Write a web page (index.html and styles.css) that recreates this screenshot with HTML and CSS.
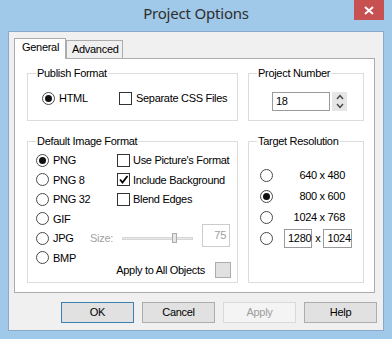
FILE: index.html
```html
<!DOCTYPE html>
<html lang="en">
<head>
    <meta charset="UTF-8">
    <title>Project Options</title>
    <link rel="stylesheet" href="styles.css">
</head>
<body>
    <div class="window">
        <div class="titlebar">
            <div class="title">Project Options</div>
            <div class="close">
                <svg width="10" height="9" viewBox="0 0 10 9"><path d="M1 1 L9 8 M9 1 L1 8" stroke="#fff" stroke-width="2" fill="none"/></svg>
            </div>
        </div>

        <div class="client">
            <div class="tabs">
                <div class="tab active">General</div>
                <div class="tab">Advanced</div>
            </div>

            <div class="panel">
                <!-- Publish Format -->
                <div class="group">
                    <div class="group-title">Publish Format</div>
                    <div class="publish-row">
                        <div class="opt html-opt"><span class="radio on"></span>HTML</div>
                        <div class="opt"><span class="check"></span>Separate CSS Files</div>
                    </div>
                </div>

                <!-- Project Number -->
                <div class="group">
                    <div class="group-title">Project Number</div>
                    <div class="spin-row">
                        <div class="field num">18</div>
                        <div class="spin">
                            <svg width="8" height="6" viewBox="0 0 8 6"><polyline points="1,5 4,1.5 7,5" stroke="#444" stroke-width="1.4" fill="none"/></svg>
                            <svg width="8" height="6" viewBox="0 0 8 6"><polyline points="1,1 4,4.5 7,1" stroke="#444" stroke-width="1.4" fill="none"/></svg>
                        </div>
                    </div>
                </div>

                <!-- Default Image Format -->
                <div class="group">
                    <div class="group-title">Default Image Format</div>
                    <div class="image-grid">
                        <div class="opt img-radio"><span class="radio on"></span>PNG</div>
                        <div class="opt img-radio"><span class="radio"></span>PNG 8</div>
                        <div class="opt img-radio"><span class="radio"></span>PNG 32</div>
                        <div class="opt img-radio"><span class="radio"></span>GIF</div>
                        <div class="opt img-radio"><span class="radio"></span>JPG</div>
                        <div class="opt img-radio"><span class="radio"></span>BMP</div>

                        <div class="checks">
                            <div class="opt"><span class="check"></span>Use Picture's Format</div>
                            <div class="opt"><span class="check"><svg width="11" height="11" viewBox="0 0 11 11"><path d="M2 5.5 L4.5 8.5 L9.5 2" stroke="#000" stroke-width="1.8" fill="none"/></svg></span>Include Background</div>
                            <div class="opt"><span class="check"></span>Blend Edges</div>
                        </div>

                        <div class="size-row">
                            <span class="size-label">Size:</span>
                            <div class="slider"><span class="thumb"></span></div>
                            <div class="field quality">75</div>
                        </div>

                        <div class="apply-row">
                            <span>Apply to All Objects</span>
                            <span class="apply-btn"></span>
                        </div>
                    </div>
                </div>

                <!-- Target Resolution -->
                <div class="group">
                    <div class="group-title">Target Resolution</div>
                    <div class="res-list">
                        <div class="res-row"><span class="radio"></span><span class="res-label">640 x 480</span></div>
                        <div class="res-row"><span class="radio on"></span><span class="res-label">800 x 600</span></div>
                        <div class="res-row"><span class="radio"></span><span class="res-label">1024 x 768</span></div>
                        <div class="res-row">
                            <span class="radio"></span>
                            <div class="field res-w">1280</div>
                            <span class="times">x</span>
                            <div class="field res-h">1024</div>
                        </div>
                    </div>
                </div>
            </div>

            <div class="buttons">
                <div class="btn default">OK</div>
                <div class="btn">Cancel</div>
                <div class="btn disabled">Apply</div>
                <div class="btn">Help</div>
            </div>
        </div>
    </div>
</body>
</html>
```

FILE: styles.css
```css
body {
    margin: 0;
    background: #a0c8e8;
    font-family: "Liberation Sans", Arial, sans-serif;
    font-size: 11px;
    letter-spacing: -0.3px;
    color: #000;
}
.window {
    width: 392px;
    height: 339px;
    display: flex;
    flex-direction: column;
}

/* title bar */
.titlebar {
    height: 31px;
    display: grid;
    grid-template-columns: 1fr auto 1fr;
}
.title {
    grid-column: 2;
    font-family: "Noto Sans", sans-serif;
    font-size: 15px;
    letter-spacing: -0.2px;
    line-height: 27px;
    color: #2e2e2e;
}
.close {
    grid-column: 3;
    justify-self: end;
    align-self: start;
    width: 30px;
    height: 20px;
    margin-right: 8px;
    background: #c75050;
    display: flex;
    align-items: center;
    justify-content: center;
}

/* client area */
.client {
    margin: 0 8px;
    height: 300px;
    box-sizing: border-box;
    border: 1px solid #8aa9c8;
    background: #f0f0f0;
    padding: 6px 0 0 5px;
}
.tabs {
    display: flex;
    align-items: flex-end;
    height: 21px;
    margin-bottom: -1px;
    position: relative;
}
.tab {
    box-sizing: border-box;
    border: 1px solid #acacac;
    border-bottom: 0;
    line-height: 15px;
    padding-top: 1px;
}
.tab.active {
    width: 52px;
    height: 21px;
    padding-left: 7px;
    background: #fff;
    z-index: 1;
}
.tab:not(.active) {
    width: 57px;
    height: 18px;
    margin-bottom: 1px;
    padding-left: 5px;
    background: #f0f0f0;
}
.panel {
    width: 361px;
    height: 235px;
    box-sizing: border-box;
    border: 1px solid #acacac;
    background: #fff;
    padding: 14px 10px 0 12px;
    display: grid;
    grid-template-columns: 211px 116px;
    grid-template-rows: 48px 142px;
    column-gap: 10px;
    row-gap: 20px;
}

/* group boxes */
.group {
    box-sizing: border-box;
    border: 1px solid #dcdcdc;
}
.group-title {
    width: fit-content;
    margin: -7px 0 0 8px;
    padding: 0 1px;
    line-height: 13px;
    background: #fff;
}

/* radios and checkboxes */
.opt {
    display: flex;
    align-items: center;
    gap: 4px;
    white-space: nowrap;
}
.radio {
    width: 13px;
    height: 13px;
    box-sizing: border-box;
    border: 1px solid #4a4a4a;
    border-radius: 50%;
    background: #fff;
    display: flex;
    align-items: center;
    justify-content: center;
    flex-shrink: 0;
}
.radio.on::after {
    content: "";
    width: 7px;
    height: 7px;
    border-radius: 50%;
    background: #111;
}
.check {
    width: 13px;
    height: 13px;
    box-sizing: border-box;
    border: 1px solid #333;
    background: #fff;
    display: flex;
    align-items: center;
    justify-content: center;
    flex-shrink: 0;
}
.field {
    box-sizing: border-box;
    border: 1px solid #9a9a9a;
    background: #fff;
    height: 19px;
    line-height: 17px;
    padding-left: 3px;
}

/* publish format */
.publish-row {
    display: flex;
    align-items: center;
    height: 15px;
    margin-top: 10.5px;
    padding-left: 14px;
}
.html-opt { width: 77px; }

/* project number */
.spin-row {
    display: flex;
    margin-top: 12px;
    padding-left: 23px;
}
.field.num { width: 58px; }
.spin {
    width: 15px;
    height: 19px;
    margin-left: 2px;
    background: #e6e6e6;
    display: flex;
    flex-direction: column;
    align-items: center;
    justify-content: center;
    gap: 3px;
}

/* default image format */
.image-grid {
    margin-top: 2.5px;
    padding: 0 6px 0 8px;
    display: grid;
    grid-template-columns: 54px 1fr;
    grid-template-rows: repeat(6, 19.5px) 14px;
}
.img-radio { grid-column: 1; }
.checks {
    grid-column: 2;
    grid-row: 1 / 4;
    padding-left: 27px;
    display: flex;
    flex-direction: column;
}
.checks .opt {
    height: 20.5px;
    gap: 3px;
}
.size-row {
    grid-column: 2;
    grid-row: 5;
    display: flex;
    align-items: center;
}
.size-label {
    width: 32px;
    color: #a3a3a3;
}
.slider {
    position: relative;
    width: 71px;
    height: 3px;
    box-sizing: border-box;
    border: 1px solid #d6d6d6;
    background: #e7eaea;
}
.thumb {
    position: absolute;
    left: 49px;
    top: -5px;
    width: 5px;
    height: 10px;
    box-sizing: border-box;
    border: 1px solid #acacac;
    background: #e6e6e6;
}
.field.quality {
    width: 28px;
    height: 23px;
    margin-left: 9px;
    margin-bottom: 5px;
    border-color: #cccccc;
    color: #a0a0a0;
    text-align: right;
    padding: 0 3px 0 0;
    line-height: 21px;
}
.apply-row {
    grid-column: 2;
    grid-row: 6 / 8;
    align-self: end;
    margin-bottom: 3.5px;
    display: flex;
    justify-content: flex-end;
    align-items: center;
    gap: 10px;
}
.apply-btn {
    width: 16px;
    height: 16px;
    box-sizing: border-box;
    border: 1px solid #adadad;
    background: #e1e1e1;
}

/* target resolution */
.res-list {
    margin-top: 16.5px;
    padding: 0 18px 0 11px;
}
.res-row {
    display: flex;
    align-items: center;
    height: 21px;
}
.res-label {
    flex: 1;
    text-align: right;
}
.field.res-w { width: 30px; margin-left: 11px; }
.field.res-h { width: 29px; }
.times { margin: 0 3px; }

/* dialog buttons */
.buttons {
    margin-top: 9px;
    padding-right: 6px;
    display: flex;
    justify-content: flex-end;
    gap: 8px;
}
.btn {
    width: 73px;
    height: 21px;
    box-sizing: border-box;
    border: 1px solid #adadad;
    background: #e1e1e1;
    text-align: center;
    line-height: 19px;
}
.btn.default { border-color: #3c7fb1; }
.btn.disabled {
    background: #f4f4f4;
    border-color: #d9d9d9;
    color: #9d9d9d;
}
```
